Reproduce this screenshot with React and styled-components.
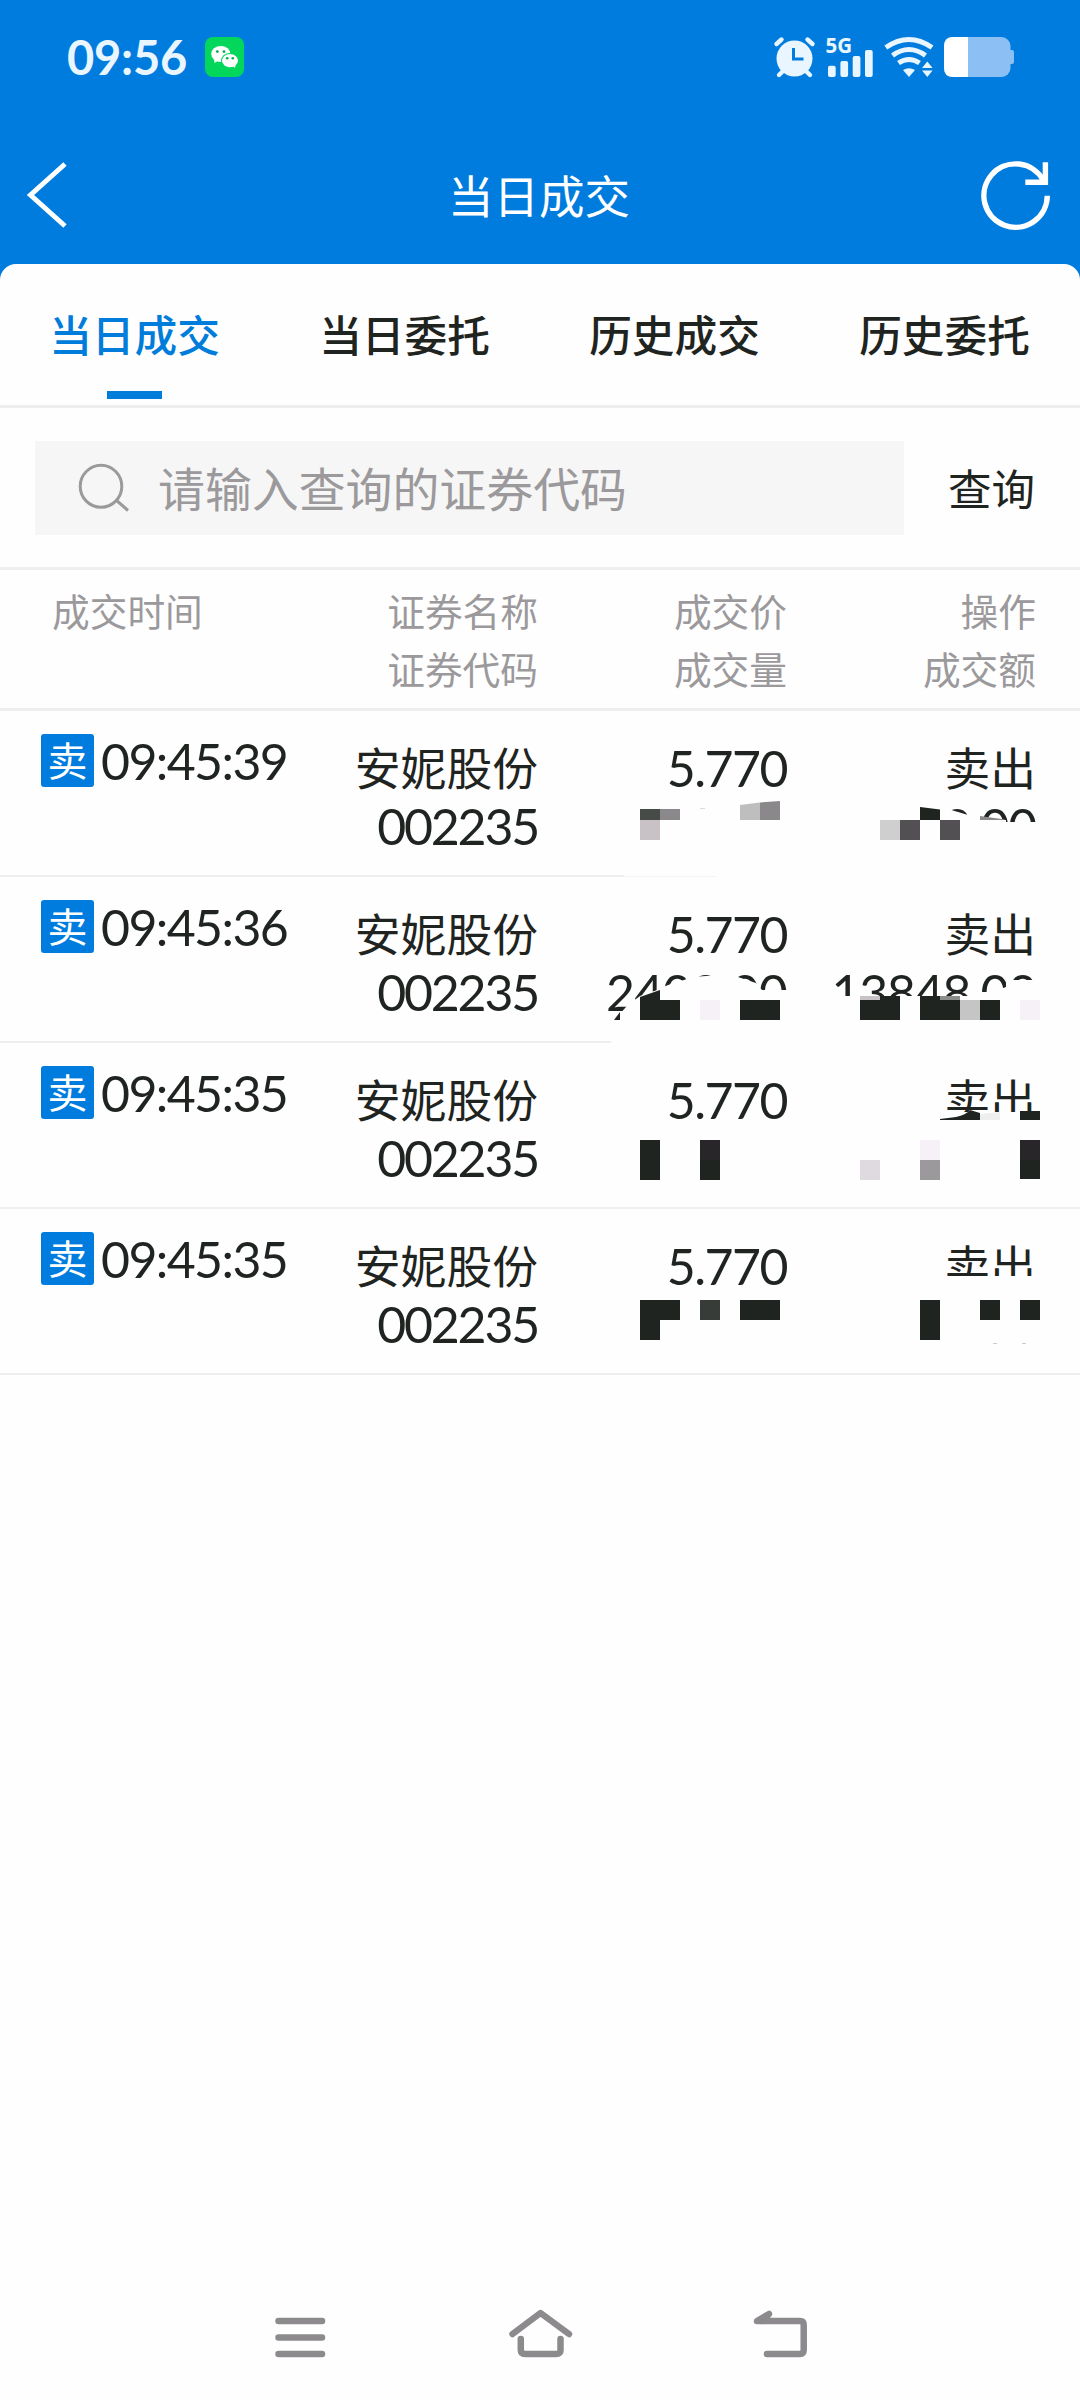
import styled, { createGlobalStyle } from "styled-components";

const GlobalStyle = createGlobalStyle`
  * {
    box-sizing: border-box;
  }
  body {
    margin: 0;
    background-color: #fefefe;
    font-family: "Noto Sans CJK SC", sans-serif;
    color: #1f2421;
  }
`;

const Page = styled.div`
  width: 1080px;
  height: 2400px;
  display: flex;
  flex-direction: column;
  background-color: #fefefe;
  overflow: hidden;
`;

const Header = styled.header`
  height: 264px;
  flex: none;
  background-color: #007cde;
  color: #fff;
`;

const StatusBar = styled.div`
  height: 114px;
  display: flex;
  align-items: center;
  justify-content: space-between;
  padding: 0 66px 0 67px;
`;

const StatusGroup = styled.div`
  display: flex;
  align-items: center;
`;

const Clock = styled.span`
  width: 138px;
  font-family: Lato, sans-serif;
  font-weight: 700;
  font-size: 47px;
  line-height: 56px;
  letter-spacing: -0.2px;
  color: #e9f6ff;
`;

const StatusSvg = styled.svg`
  overflow: visible;
`;

const TitleBar = styled.div`
  height: 150px;
  display: grid;
  grid-template-columns: 72px 1fr 72px;
  align-items: center;
  padding: 12px 28px 0 26px;
`;

const Title = styled.h1`
  margin: 0;
  padding-bottom: 2px;
  font-size: 45.5px;
  font-weight: 400;
  line-height: 60px;
  text-align: center;
`;

const SheetWrap = styled.div`
  background-color: #007cde;
`;

const Tabs = styled.nav`
  height: 144px;
  display: grid;
  grid-template-columns: repeat(4, 1fr);
  background-color: #fefefe;
  border-radius: 16px 16px 0 0;
  border-bottom: 3px solid #eee;
`;

const Tab = styled.button`
  border: none;
  background: none;
  padding: 39px 1px 6px 0;
  display: flex;
  flex-direction: column;
  align-items: center;
  justify-content: space-between;
  font-family: inherit;
  font-size: 42.7px;
  font-weight: 500;
  line-height: 60px;
  color: ${(props) => (props.$active ? "#007cda" : "#1f2421")};

  &::after {
    content: "";
    width: 55px;
    height: 8px;
    background-color: ${(props) => (props.$active ? "#007cda" : "transparent")};
  }
`;

const SearchBar = styled.div`
  height: 162px;
  flex: none;
  display: flex;
  align-items: center;
  padding: 1px 0 0 35px;
  border-bottom: 3px solid #eee;
`;

const SearchBox = styled.div`
  width: 869px;
  height: 94px;
  display: flex;
  align-items: center;
  padding-left: 43px;
  gap: 28px;
  background-color: #f6f6f6;
`;

const Placeholder = styled.span`
  padding-bottom: 2px;
  font-size: 46.9px;
  line-height: 60px;
  color: #9b999b;
`;

const SearchButton = styled.button`
  border: none;
  background: none;
  padding: 0;
  margin-left: 44px;
  font-family: inherit;
  font-size: 43.5px;
  line-height: 60px;
  color: #1f2421;
`;

const columns = `
  display: grid;
  grid-template-columns: 1fr 249px 249px 249px;
`;

const TableHead = styled.div`
  ${columns}
  height: 141px;
  flex: none;
  padding: 11px 44px 0 52px;
  border-bottom: 3px solid #eee;
  font-size: 37.7px;
  line-height: 58px;
  color: #9b999b;
`;

const Row = styled.div`
  ${columns}
  position: relative;
  height: 166px;
  flex: none;
  padding: 28px 44px 0 41px;
  border-bottom: 2px solid #eee;
`;

const Cell = styled.div`
  display: flex;
  flex-direction: column;
  align-items: ${(props) => (props.$left ? "flex-start" : "flex-end")};
  white-space: nowrap;
`;

const Text = styled.span`
  padding-bottom: 4px;
  font-size: 45.8px;
  line-height: 54px;
`;

const Digits = styled.span`
  font-family: Lato, sans-serif;
  font-size: 50px;
  line-height: 58px;
  letter-spacing: ${(props) => props.$spacing};
`;

const TimeCell = styled.div`
  display: flex;
  align-items: flex-start;
  gap: 7px;
  margin-top: -7px;
`;

const SellBadge = styled.span`
  width: 53px;
  height: 53px;
  margin-top: 2px;
  border-radius: 3px;
  background-color: #007cde;
  color: #fff;
  font-size: 40px;
  line-height: 50px;
  text-align: center;
`;

// covers the private volumes and amounts
const MosaicLayer = styled.svg`
  position: absolute;
  left: 0;
  top: 0;
`;

const NavBar = styled.footer`
  margin-top: auto;
  height: 126px;
  display: flex;
  justify-content: center;
  align-items: center;
  gap: 170px;
`;

const INK = "#1f2421";
const BG = "#fefefe";

const tabs = ["当日成交", "当日委托", "历史成交", "历史委托"];

const heads = [
  ["成交时间"],
  ["证券名称", "证券代码"],
  ["成交价", "成交量"],
  ["操作", "成交额"],
];

const deals = [
  {
    time: "09:45:39",
    volume: "",
    amount: "8.00",
    mosaic: [
      ["M930 98 L948 98 L968 104 L980 109 H1006 V111 H1045 V150 H930Z", BG],
      ["M624 163 H1080 V166 H624Z", BG],
      ["M624 165 H716 V166 H624Z", "#f4f4f4"],
      ["M640 98 H660 V109 H640Z", "#474b47"],
      ["M660 98 H680 V109 H660Z", "#8b888c"],
      ["M640 109 H660 V129 H640Z", "#c8c2c7"],
      ["M740 94 L760 91.5 V109 H740Z", "#bebebe"],
      ["M760 91.5 L780 90 V109 H760Z", "#8b888c"],
      ["M880 109 H900 V129 H880Z", "#cfcfcf"],
      ["M900 109 H920 V129 H900Z", "#525052"],
      ["M920 96 L940 98.5 V109 H920Z", INK],
      ["M940 109 H960 V129 H940Z", "#525052"],
      ["M980 105 L1005 108.5 V109 H980Z", "#8b888c"],
      ["M700 97 H705 V98 H700Z", "#ddd"],
    ],
  },
  {
    time: "09:45:36",
    volume: "2400.00",
    amount: "13848.00",
    mosaic: [
      [
        "M626 130 L632 125 L640 119 L660 112 L663 110 L676 105 L684 103 L692 100 L706 99 L735 99 L756 106 L762 113 H790 V150 H600 V134.5 H622Z",
        BG,
      ],
      ["M830 119 H978 V115 H992 L1006 110 V103 H1045 V150 H830Z", BG],
      ["M611 163 H1080 V166 H611Z", BG],
      ["M614 143 L620 135 V143Z", INK],
      ["M640 122 V120 L660 113 V123 H680 V143 H640Z", INK],
      ["M700 123 H720 V143 H700Z", "#f6f1f6"],
      ["M740 123 H780 V143 H740Z", INK],
      ["M860 119 H880 V123 H860Z", "#c8c2c7"],
      ["M860 123 H880 V119 H900 V143 H860Z", INK],
      ["M920 119 H940 V123 H960 V143 H920Z", INK],
      ["M940 119 H960 V123 H940Z", "#8b8e8b"],
      ["M960 123 H980 V143 H960Z", "#c5c5c5"],
      ["M980 123 H1000 V143 H980Z", INK],
      ["M1020 123 H1040 V143 H1020Z", "#f6f1f6"],
    ],
  },
  {
    time: "09:45:35",
    volume: "",
    amount: "",
    mosaic: [
      ["M940 69 H1040 V90 H940Z", BG],
      ["M940 76 L956 74 Q966 72 970 67 L980 70 V77 H940Z", INK],
      ["M980 71 L1000 69 V77 H980Z", "#eee"],
      ["M1020 68 H1040 V77 H1020Z", INK],
      ["M640 97 H660 V137 H640Z", INK],
      ["M700 97 H720 V117 H700Z", "#282628"],
      ["M700 117 H720 V137 H700Z", INK],
      ["M860 117 H880 V137 H860Z", "#dfdadf"],
      ["M920 97 H940 V117 H920Z", "#f6f1f6"],
      ["M920 117 H940 V137 H920Z", "#9b999c"],
      ["M1020 97 H1040 V117 H1020Z", "#282628"],
      ["M1020 117 H1040 V136 H1020Z", INK],
    ],
  },
  {
    time: "09:45:35",
    volume: "",
    amount: "",
    mosaic: [
      ["M940 67 H1040 V90 H940Z", BG],
      ["M640 91 H680 V111 H660 V131 H640Z", INK],
      ["M700 91 H720 V111 H700Z", "#383c39"],
      ["M740 91 H780 V111 H740Z", INK],
      ["M920 91 H940 V131 H920Z", INK],
      ["M980 91 H1000 V111 H980Z", INK],
      ["M1020 91 H1040 V111 H1020Z", INK],
      ["M993 134 H997 V135 H993Z M1022 134 H1026 V135 H1022Z", "#ccc"],
    ],
  },
];

const WechatIcon = () => (
  <svg width="39" height="40" viewBox="0 0 39 40">
    <rect width="39" height="40" rx="8" fill="#02d75b" />
    <path d="M9 21 L9.5 26 L14 23Z" fill="#fff" />
    <ellipse cx="15.8" cy="17" rx="9.6" ry="8" fill="#fff" />
    <ellipse cx="25" cy="23.6" rx="9" ry="7.6" fill="#02d75b" />
    <path d="M26 28 L30 31 L30.5 27Z" fill="#fff" />
    <ellipse cx="25" cy="23.6" rx="8" ry="6.6" fill="#fff" />
    <g fill="#02b04a">
      <circle cx="12.3" cy="14.6" r="1.4" />
      <circle cx="19" cy="14.6" r="1.4" />
      <circle cx="22.2" cy="21.3" r="1.3" />
      <circle cx="27.8" cy="21.3" r="1.3" />
    </g>
  </svg>
);

const StatusIcons = () => (
  <StatusSvg width="240" height="60" viewBox="774 27 240 60">
    <g fill="#e9f6ff" stroke="#e9f6ff">
      <circle cx="794.5" cy="58.5" r="18" stroke="none" />
      <path
        d="M776.5 44 L781.5 39.5 M812.5 44 L807.5 39.5"
        strokeWidth="4.4"
        strokeLinecap="round"
      />
      <path
        d="M779 75 L783 71 M810 75 L806 71"
        strokeWidth="4.4"
        strokeLinecap="round"
      />
    </g>
    <path d="M793.5 48 V59 H803.5" fill="none" stroke="#007cde" strokeWidth="3" />
    <text
      x="825.5"
      y="52.6"
      fill="#e9f6ff"
      fontFamily="Noto Sans, sans-serif"
      fontWeight="700"
      fontSize="20.5"
    >
      5G
    </text>
    <g fill="#e9f6ff">
      <rect x="828" y="65.7" width="7.7" height="11.3" rx="2" />
      <rect x="840.4" y="61" width="7.7" height="16" rx="2" />
      <rect x="852.7" y="56" width="7.7" height="21" rx="2" />
      <rect x="865" y="50" width="7.7" height="27" rx="2" />
    </g>
    <g fill="none" stroke="#e9f6ff" strokeWidth="5">
      <path d="M885.8 47.5 Q909 31.5 932 47.5" />
      <path d="M892.5 55.5 Q909 43.5 925.5 55.5" />
      <path d="M898.5 63 Q909 56 919.5 63" />
    </g>
    <g fill="#e9f6ff">
      <path d="M903 70 Q909 66.5 915 70 L909 77Z" />
      <path d="M922 68 L927.3 61.5 L932.6 68Z" />
      <path d="M922 70.5 H932.6 L927.3 77Z" />
    </g>
    <rect x="944" y="37" width="66.5" height="40" rx="9" fill="#8cc0f5" />
    <path d="M1010 50 H1012 Q1014 50 1014 52 V62 Q1014 64 1012 64 H1010Z" fill="#8cc0f5" />
    <path d="M968 37 V77 H953 Q944 77 944 68 V46 Q944 37 953 37Z" fill="#fff" />
  </StatusSvg>
);

const BackIcon = () => (
  <svg width="42" height="70" viewBox="26 160 42 70">
    <path
      d="M65 164 L30.5 195 L65 226"
      fill="none"
      stroke="#fff"
      strokeWidth="5"
    />
  </svg>
);

const RefreshIcon = () => (
  <svg width="72" height="72" viewBox="980 160 72 72">
    <g fill="none" stroke="#fff" strokeWidth="5.4">
      <path d="M1047.3 196.7 A31.7 31.7 0 1 1 1043.5 181.5" />
      <path d="M1045.4 163.3 V183.3 H1025.3" />
    </g>
  </svg>
);

const SearchIcon = () => (
  <svg width="52" height="50" viewBox="78 463 52 50">
    <g fill="none" stroke="#9b999b" strokeWidth="3">
      <ellipse cx="101" cy="486.3" rx="20.8" ry="21" />
      <path d="M116 500 L128 510.5" />
    </g>
  </svg>
);

const NavIcon = ({ d }) => (
  <svg width="70" height="60" viewBox="0 0 70 60">
    <path
      d={d}
      fill="none"
      stroke="#8c8a8d"
      strokeWidth="6.5"
      strokeLinecap="round"
      strokeLinejoin="round"
    />
  </svg>
);

const DealRow = ({ deal }) => (
  <Row>
    <Cell $left>
      <TimeCell>
        <SellBadge>卖</SellBadge>
        <Digits $spacing="-1.6px">{deal.time}</Digits>
      </TimeCell>
    </Cell>
    <Cell>
      <Text>安妮股份</Text>
      <Digits $spacing="-2.2px">002235</Digits>
    </Cell>
    <Cell>
      <Digits $spacing="-1.5px">5.770</Digits>
      <Digits $spacing="-0.7px">{deal.volume}</Digits>
    </Cell>
    <Cell>
      <Text>卖出</Text>
      <Digits $spacing="-1.3px">{deal.amount}</Digits>
    </Cell>
    <MosaicLayer width="1080" height="166" viewBox="0 0 1080 166">
      {deal.mosaic.map(([d, fill]) => (
        <path key={d} d={d} fill={fill} />
      ))}
    </MosaicLayer>
  </Row>
);

const App = () => {
  return (
    <Page>
      <GlobalStyle />
      <Header>
        <StatusBar>
          <StatusGroup>
            <Clock>09:56</Clock>
            <WechatIcon />
          </StatusGroup>
          <StatusIcons />
        </StatusBar>
        <TitleBar>
          <BackIcon />
          <Title>当日成交</Title>
          <RefreshIcon />
        </TitleBar>
      </Header>
      <SheetWrap>
        <Tabs>
          {tabs.map((tab, i) => (
            <Tab key={tab} $active={i === 0}>
              {tab}
            </Tab>
          ))}
        </Tabs>
      </SheetWrap>
      <SearchBar>
        <SearchBox>
          <SearchIcon />
          <Placeholder>请输入查询的证券代码</Placeholder>
        </SearchBox>
        <SearchButton>查询</SearchButton>
      </SearchBar>
      <TableHead>
        {heads.map((lines, i) => (
          <Cell key={lines[0]} $left={i === 0}>
            {lines.map((line) => (
              <span key={line}>{line}</span>
            ))}
          </Cell>
        ))}
      </TableHead>
      {deals.map((deal, i) => (
        <DealRow key={i} deal={deal} />
      ))}
      <NavBar>
        <NavIcon d="M13.5 14 H57 M13.5 30.5 H57 M13.5 47 H57" />
        <NavIcon d="M7.5 27 L35.5 6 L64 27 M15.8 32 V43 Q15.8 47 20 47 H51 Q55.5 47 55.5 43 V32" />
        <NavIcon d="M22 47 H55 Q58.7 47 58.7 43 V18 Q58.7 14 55 14 H12 L24 7 L17 14" />
      </NavBar>
    </Page>
  );
};

export default App;
